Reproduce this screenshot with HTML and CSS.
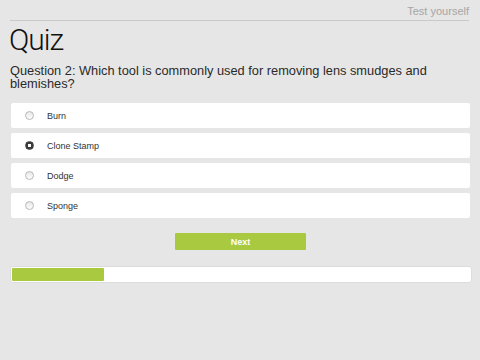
FILE: index.html
```html
<!DOCTYPE html>
<html>
<head>
  <title>Quiz</title>
  <link rel="stylesheet" href="styles.css">
</head>
<body>
  <div class="topbar">
    <span class="topbar-title">Test yourself</span>
  </div>

  <h1>Quiz</h1>
  <p class="question">Question 2: Which tool is commonly used for removing lens smudges and blemishes?</p>

  <div class="options">
    <label class="option">
      <span class="radio"></span>
      <span class="option-text">Burn</span>
    </label>
    <label class="option">
      <span class="radio checked"></span>
      <span class="option-text">Clone Stamp</span>
    </label>
    <label class="option">
      <span class="radio"></span>
      <span class="option-text">Dodge</span>
    </label>
    <label class="option">
      <span class="radio"></span>
      <span class="option-text">Sponge</span>
    </label>
  </div>

  <div class="actions">
    <button class="next-btn">Next</button>
  </div>

  <div class="progress">
    <div class="progress-fill" style="width: 20%;"></div>
  </div>
</body>
</html>
```

FILE: styles.css
```css
body {
  font-family: "Liberation Sans", Arial, sans-serif;
  margin: 0;
  padding: 0 10px;
  background-color: #e6e6e6;
  color: #222;
}
.topbar {
  height: 20px;
  border-bottom: 1px solid #c9c9c9;
  display: flex;
  justify-content: flex-end;
  align-items: flex-start;
  margin-right: 1px;
}
.topbar-title {
  font-size: 11px;
  color: #a5a5a5;
  padding-top: 5px;
}
h1 {
  font-family: Roboto, sans-serif;
  font-weight: 300;
  font-size: 30px;
  margin: 3px 0 0 -1px;
  line-height: 32px;
  color: #111;
  letter-spacing: -1px;
}
.question {
  font-size: 12.8px;
  line-height: 13px;
  margin: 8px 0 0 0;
  color: #2a2a2a;
}
.options {
  display: flex;
  flex-direction: column;
  gap: 5px;
  margin-top: 13px;
  padding-left: 1px;
}
.option {
  background-color: #fff;
  border-radius: 2px;
  height: 25px;
  display: flex;
  align-items: center;
}
.radio {
  width: 7px;
  height: 7px;
  border-radius: 50%;
  border: 1px solid #b8b8b8;
  background: linear-gradient(#e8e8e8, #fdfdfd);
  margin-left: 14px;
  flex: 0 0 auto;
}
.radio.checked {
  border: 1px solid #444;
  background: radial-gradient(circle, #fff 0, #fff 1.5px, #3a3a3a 2px);
}
.option-text {
  font-size: 9px;
  color: #333;
  margin-left: 13px;
}
.actions {
  display: flex;
  justify-content: center;
  margin-top: 15px;
}
.next-btn {
  width: 131px;
  height: 17px;
  border: none;
  border-radius: 1px;
  background-color: #a8c940;
  color: #fff;
  font-family: "Liberation Sans", Arial, sans-serif;
  font-weight: bold;
  font-size: 9px;
  padding: 0;
  margin-left: 1px;
}
.progress {
  margin-top: 16px;
  height: 13px;
  background-color: #fff;
  border: 1px solid #dcdcdc;
  border-radius: 3px;
  padding: 1px;
  margin-right: -2px;
}
.progress-fill {
  height: 100%;
  background-color: #a8c940;
  border-radius: 1px;
}
```
